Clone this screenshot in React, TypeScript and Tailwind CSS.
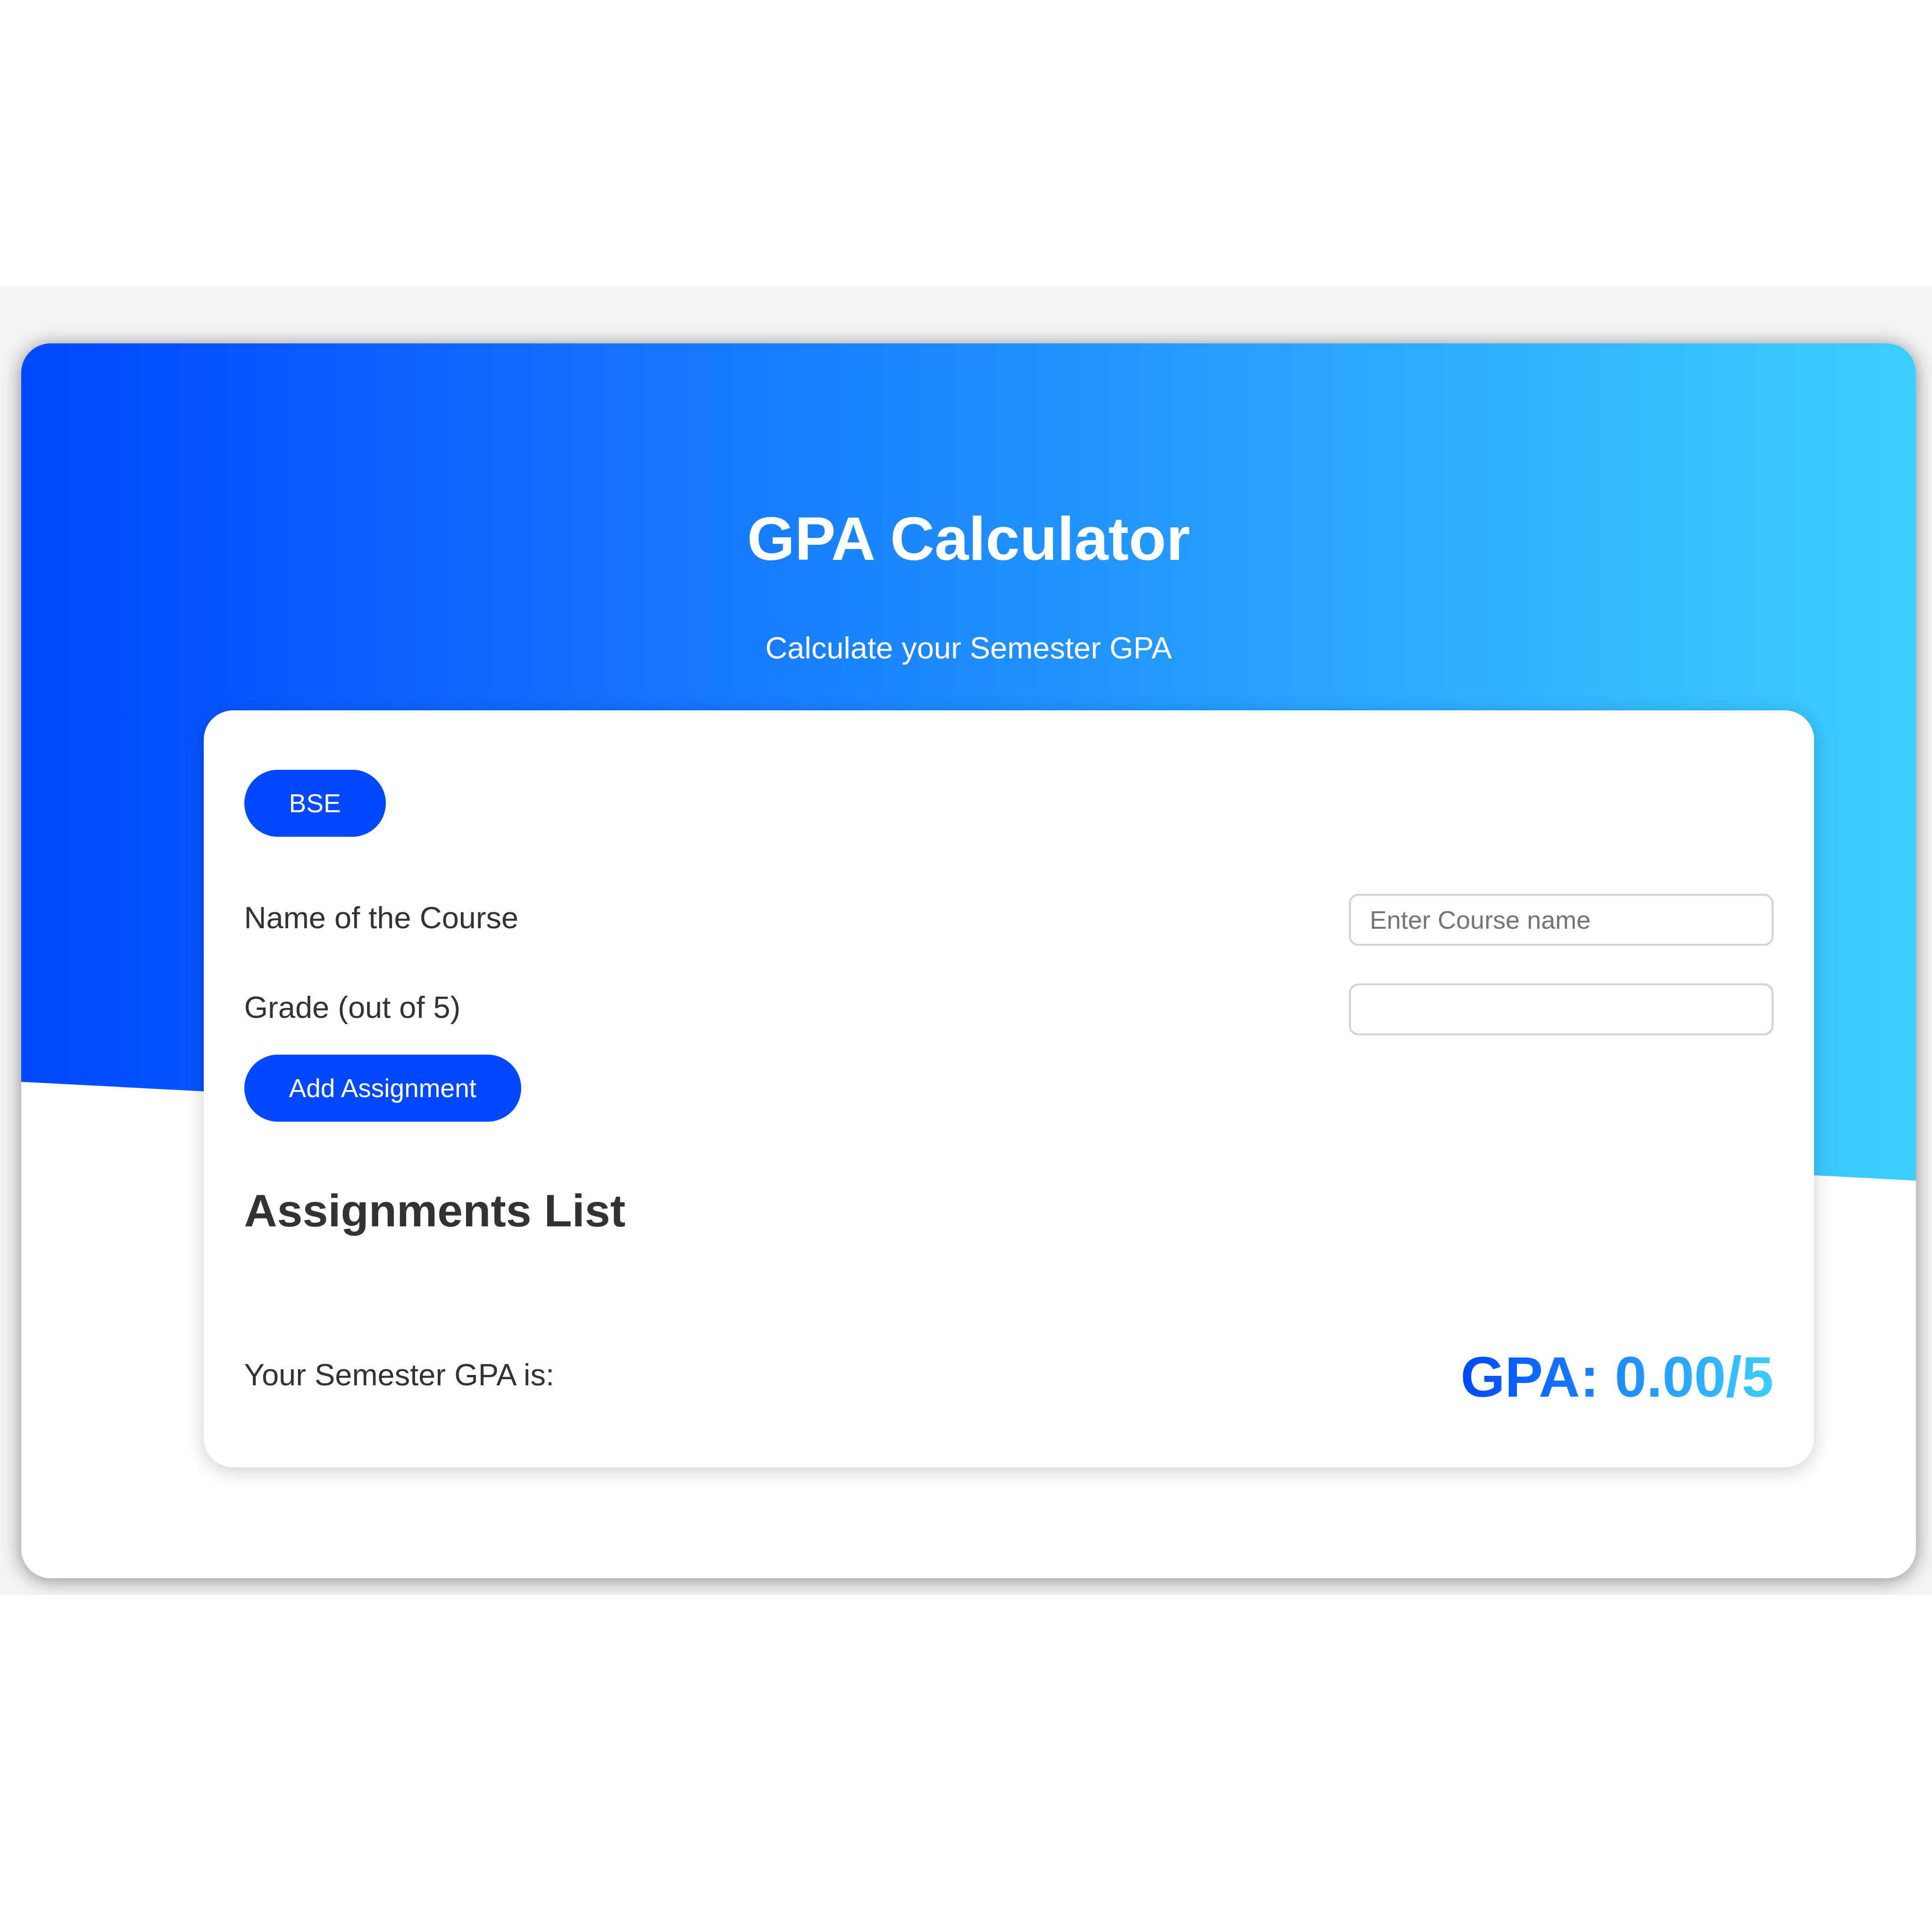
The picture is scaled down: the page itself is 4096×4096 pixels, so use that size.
import { useState } from "react";
import type { FormEvent, ReactNode } from "react";

type Assignment = { name: string; grade: number };

const fieldClass =
  "h-[110px] w-[900px] rounded-[20px] border-4 border-[#d3d3d3] bg-white px-[40px] text-[54px] text-[#333333] placeholder:text-[#757575] outline-none";

const buttonClass =
  "h-[142px] cursor-pointer rounded-full bg-[#0048ff] px-[95px] text-[55px] leading-[66px] text-white";

function Field({ id, label, children }: { id: string; label: string; children: ReactNode }) {
  return (
    <div className="flex items-center justify-between">
      <label htmlFor={id} className="pb-2 text-[65px] leading-[76px]">
        {label}
      </label>
      {children}
    </div>
  );
}

export default function App() {
  const [name, setName] = useState("");
  const [grade, setGrade] = useState("");
  const [assignments, setAssignments] = useState<Assignment[]>([]);

  const total = assignments.reduce((sum, item) => sum + item.grade, 0);
  const gpa = assignments.length ? total / assignments.length : 0;

  const addAssignment = (event: FormEvent) => {
    event.preventDefault();
    const value = Number(grade);
    if (!name || !grade || Number.isNaN(value)) return;
    setAssignments([...assignments, { name, grade: value }]);
    setName("");
    setGrade("");
  };

  return (
    <div className="min-h-screen bg-white pt-[606px] font-['Liberation_Sans',Arial,sans-serif] text-[#333333]">
      <div className="overflow-hidden bg-[#f4f4f4] pt-[122px] pr-[34px] pb-[35px] pl-[45px]">
        <main className="relative isolate rounded-[62px] bg-white pt-[339px] pb-[235px] shadow-[0_4px_42px_rgba(0,0,0,0.45)]">
          <div className="absolute inset-0 -z-10 overflow-hidden rounded-[62px]">
            <div className="h-full bg-[linear-gradient(to_right,#0048ff,#3ccfff)] [clip-path:polygon(0_0,100%_0,100%_67.8%,0_59.8%)]" />
          </div>

          <header className="text-center text-white">
            <h1 className="text-[130px] leading-[150px] font-bold">GPA Calculator</h1>
            <p className="mt-[119px] text-[65px] leading-[76px]">Calculate your Semester GPA</p>
          </header>

          <section className="mt-[94px] mr-[216px] ml-auto w-[85%] rounded-[62px] bg-white px-[86px] pt-[126px] pb-[121px] shadow-[0_8px_42px_rgba(0,0,0,0.2)]">
            <button type="button" className={buttonClass}>
              BSE
            </button>

            <form onSubmit={addAssignment} className="mt-[121px]">
              <div className="flex flex-col gap-20">
                <Field id="course" label="Name of the Course">
                  <input
                    id="course"
                    type="text"
                    placeholder="Enter Course name"
                    value={name}
                    onChange={(event) => setName(event.target.value)}
                    className={fieldClass}
                  />
                </Field>
                <Field id="grade" label="Grade (out of 5)">
                  <input
                    id="grade"
                    type="text"
                    inputMode="decimal"
                    value={grade}
                    onChange={(event) => setGrade(event.target.value)}
                    className={fieldClass}
                  />
                </Field>
              </div>
              <button type="submit" className={`${buttonClass} mt-[41px]`}>
                Add Assignment
              </button>
            </form>

            <h2 className="mt-[132px] text-[97px] leading-[114px] font-bold">Assignments List</h2>
            <ul className="text-[65px] leading-[76px]">
              {assignments.map((item, index) => (
                <li key={index} className="flex justify-between pt-10">
                  <span>{item.name}</span>
                  <span>{item.grade}</span>
                </li>
              ))}
            </ul>

            <div className="mt-56 flex items-center justify-between">
              <p className="pb-2 text-[65px] leading-[76px]">Your Semester GPA is:</p>
              <output className="bg-[linear-gradient(to_right,#0048ff,#3ccfff)] bg-clip-text text-[121px] leading-[142px] font-bold text-transparent">
                GPA: {gpa.toFixed(2)}/5
              </output>
            </div>
          </section>
        </main>
      </div>
    </div>
  );
}
